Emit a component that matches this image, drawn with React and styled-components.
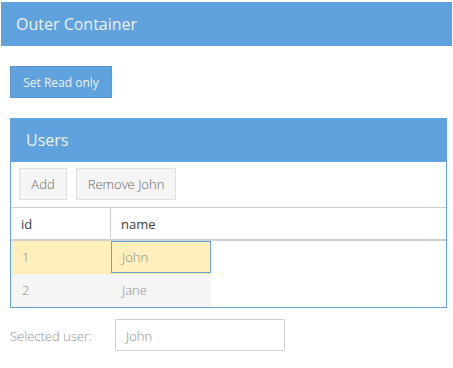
import React, { useState } from "react";
import styled, { createGlobalStyle } from "styled-components";

const GlobalStyle = createGlobalStyle`
  body {
    margin: 0;
    padding: 2px 1px 1px;
    background: #fff;
    font-family: "Open Sans", "Liberation Sans", sans-serif;
  }
`;

const Outer = styled.div`
  width: 451px;
`;

const PanelHeader = styled.div`
  height: 44px;
  display: flex;
  align-items: center;
  padding-left: ${(p) => p.$indent}px;
  background: #5fa2dd;
  color: #f0f0f0;
  font-size: 16px;
`;

const OuterBody = styled.div`
  padding: 20px 5px 0 9px;
  display: flex;
  flex-direction: column;
  align-items: flex-start;
`;

const BlueButton = styled.button`
  height: 32px;
  width: 102px;
  padding: 0;
  border: 1px solid #5897d0;
  background: #5fa2dd;
  color: #f0f0f0;
  font: 12px "Open Sans", "Liberation Sans", sans-serif;
  margin-bottom: 20px;
`;

const Panel = styled.div`
  width: 437px;
`;

const PanelBody = styled.div`
  border: 1px solid #5fa2dd;
  border-top: none;
`;

const Toolbar = styled.div`
  display: flex;
  gap: 9px;
  padding: 6px 8px 7px;
`;

const ToolButton = styled.button`
  height: 32px;
  width: ${(p) => p.$w}px;
  padding: 0;
  border: 1px solid #e0e0e0;
  background: #f5f5f5;
  color: #666;
  font: 300 13px "Open Sans", "Liberation Sans", sans-serif;
`;

const GridHeader = styled.div`
  display: flex;
  height: 31px;
  border-top: 1px solid #d0d0d0;
  border-bottom: 2px solid #d0d0d0;
`;

const HeaderCell = styled.div`
  display: flex;
  align-items: center;
  padding-left: 10px;
  font-size: 13px;
  color: #404040;
  ${(p) => (p.$grow ? "flex: 1;" : "width: 89px; border-right: 1px solid #d0d0d0;")}
`;

const Row = styled.div`
  display: flex;
  width: 200px;
  height: 33px;
  background: ${(p) => (p.$selected ? "#ffefbb" : "#f5f5f5")};
  border-bottom: 1px solid ${(p) => (p.$selected ? "#ffe7a3" : "#f5f5f5")};
  box-sizing: border-box;
`;

const Cell = styled.div`
  width: 100px;
  box-sizing: border-box;
  display: flex;
  align-items: center;
  padding-left: 10px;
  font-size: 13px;
  font-weight: 300;
  color: #8c8c8c;
  border: 1px solid ${(p) => (p.$focused ? "#5fa2dd" : "transparent")};
`;

const Field = styled.div`
  display: flex;
  align-items: center;
  margin-top: 11px;
`;

const Label = styled.label`
  width: 105px;
  font-size: 13px;
  font-weight: 300;
  color: #919191;
  padding-top: 2px;
`;

const Input = styled.div`
  width: 158px;
  height: 29px;
  border: 1px solid #d0d0d0;
  padding-left: 10px;
  display: flex;
  align-items: center;
  font-size: 13px;
  font-weight: 300;
  color: #8c8c8c;
  padding-top: 1px;
`;

const users = [
  { id: 1, name: "John" },
  { id: 2, name: "Jane" },
];

export default function App() {
  const [selected] = useState(1);
  const current = users.find((u) => u.id === selected);
  return (
    <>
      <GlobalStyle />
      <Outer>
        <PanelHeader $indent={15}>Outer Container</PanelHeader>
        <OuterBody>
          <BlueButton>Set Read only</BlueButton>
          <Panel>
            <PanelHeader $indent={16}>Users</PanelHeader>
            <PanelBody>
              <Toolbar>
                <ToolButton $w={48}>Add</ToolButton>
                <ToolButton $w={100}>Remove John</ToolButton>
              </Toolbar>
              <GridHeader>
                <HeaderCell>id</HeaderCell>
                <HeaderCell $grow>name</HeaderCell>
              </GridHeader>
              {users.map((u) => (
                <Row key={u.id} $selected={u.id === selected}>
                  <Cell>{u.id}</Cell>
                  <Cell $focused={u.id === selected}>{u.name}</Cell>
                </Row>
              ))}
            </PanelBody>
          </Panel>
          <Field>
            <Label>Selected user:</Label>
            <Input>{current.name}</Input>
          </Field>
        </OuterBody>
      </Outer>
    </>
  );
}
